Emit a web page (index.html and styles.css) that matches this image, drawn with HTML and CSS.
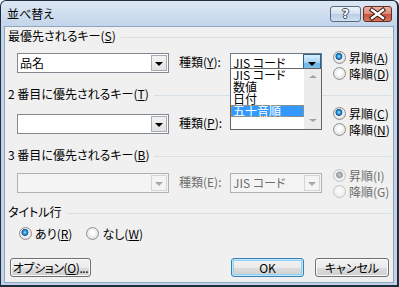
FILE: index.html
```html
<!DOCTYPE html>
<html lang="ja">
<head>
  <meta charset="UTF-8" />
  <title>並べ替え</title>
  <link rel="stylesheet" href="styles.css">
</head>
<body>
  <div class="window">
    <div class="titlebar">
      <span class="title">並べ替え</span>
      <div class="caption-buttons">
        <span class="cap-btn help">?</span>
        <span class="cap-btn close">
          <svg width="27" height="14" viewBox="0 0 27 14">
            <path d="M8 3 L19 11 M19 3 L8 11" stroke="#3b1a14" stroke-width="4.4" stroke-linecap="square" />
            <path d="M8 3 L19 11 M19 3 L8 11" stroke="#fff" stroke-width="2.4" stroke-linecap="square" />
          </svg>
        </span>
      </div>
    </div>

    <div class="frame">
      <div class="client">

        <div class="group-head first"><span>最優先されるキー(<u>S</u>)</span><i class="rule"></i></div>
        <div class="key-row row-1">
          <div class="combo wide"><span class="value">品名</span><span class="drop"><i class="arrow"></i></span></div>
          <span class="kind">種類(<u>Y</u>):</span>
          <div class="combo-wrap">
            <div class="combo narrow open"><span class="value">JIS コード</span><span class="drop"><i class="arrow"></i></span></div>
            <div class="dropdown-list">
              <ul class="items">
                <li>JIS コード</li>
                <li>数値</li>
                <li>日付</li>
                <li class="selected">五十音順</li>
              </ul>
              <div class="scrollbar">
                <i class="sb-up"></i>
                <i class="sb-down"></i>
              </div>
            </div>
          </div>
          <div class="order">
            <span class="radio"><i class="dot on"></i><span>昇順(<u>A</u>)</span></span>
            <span class="radio"><i class="dot"></i><span>降順(<u>D</u>)</span></span>
          </div>
        </div>

        <div class="group-head second"><span>2 番目に優先されるキー(<u>T</u>)</span><i class="rule"></i></div>
        <div class="key-row row-2">
          <div class="combo wide"><span class="value"></span><span class="drop"><i class="arrow"></i></span></div>
          <span class="kind">種類(<u>P</u>):</span>
          <div class="combo-wrap"></div>
          <div class="order">
            <span class="radio"><i class="dot on"></i><span>昇順(<u>C</u>)</span></span>
            <span class="radio"><i class="dot"></i><span>降順(<u>N</u>)</span></span>
          </div>
        </div>

        <div class="group-head third"><span>3 番目に優先されるキー(<u>B</u>)</span><i class="rule"></i></div>
        <div class="key-row row-3 disabled">
          <div class="combo wide"><span class="value"></span><span class="drop"><i class="arrow"></i></span></div>
          <span class="kind">種類(E):</span>
          <div class="combo-wrap">
            <div class="combo narrow"><span class="value">JIS コード</span><span class="drop"><i class="arrow"></i></span></div>
          </div>
          <div class="order">
            <span class="radio"><i class="dot on"></i><span>昇順(I)</span></span>
            <span class="radio"><i class="dot"></i><span>降順(G)</span></span>
          </div>
        </div>

        <div class="group-head fourth"><span>タイトル行</span><i class="rule"></i></div>
        <div class="title-opts">
          <span class="radio"><i class="dot on"></i><span>あり(<u>R</u>)</span></span>
          <span class="radio"><i class="dot"></i><span>なし(<u>W</u>)</span></span>
        </div>

        <div class="footer">
          <button class="btn options">オプション(<u>O</u>)...</button>
          <span class="spacer"></span>
          <button class="btn default">OK</button>
          <button class="btn cancel">キャンセル</button>
        </div>

      </div>
    </div>
  </div>
</body>
</html>
```

FILE: styles.css
```css
body {
  margin: 0;
  background: #fff;
}

.window {
  width: 399px;
  height: 287px;
  box-sizing: border-box;
  border: solid #1f2d3d;
  border-width: 1px 2px 2px 1px;
  border-radius: 6px 6px 0 0;
  background: linear-gradient(#dce7f4, #c3d5ea 25px, #c0d3e9);
  display: flex;
  flex-direction: column;
  font-family: "Noto Sans CJK JP", "Noto Sans", sans-serif;
  font-size: 12px;
  font-feature-settings: "palt";
  color: #000;
  overflow: hidden;
}

/* title bar */
.titlebar {
  height: 25px;
  flex: none;
  display: flex;
  align-items: center;
  padding: 0 5px 0 6px;
}

.title {
  flex: 1;
  font-size: 12px;
  line-height: 14px;
}

.caption-buttons {
  display: flex;
  gap: 2px;
  margin-top: 1px;
}

.cap-btn {
  height: 16px;
  box-sizing: border-box;
  border: 1px solid #5d6b80;
  border-radius: 3px;
  display: flex;
  align-items: center;
  justify-content: center;
}

.help {
  width: 31px;
  background: linear-gradient(#eef3f9, #d2dfee 50%, #b9cde4 50%, #cddff2);
  color: #fff;
  font-family: "DejaVu Sans", sans-serif;
  font-weight: bold;
  font-size: 12px;
  line-height: 14px;
  text-shadow: 1px 0 #39465a, -1px 0 #39465a, 0 1px #39465a, 0 -1px #39465a;
}

.close {
  width: 29px;
  border-color: #6a2c22;
  background: linear-gradient(#eab3a6, #d98a78 50%, #c5533a 50%, #d6775d);
}

/* frame & client */
.frame {
  flex: 1;
  display: flex;
  padding: 0 3px 2px 3px;
}

.client {
  flex: 1;
  border: 1px solid #8fa4bd;
  background: #f0f0f0;
  display: flex;
  flex-direction: column;
}

u {
  text-decoration: underline;
  text-underline-offset: 1px;
}

/* group headings */
.group-head {
  display: flex;
  align-items: center;
  height: 14px;
  line-height: 14px;
  padding: 0 2px 0 3px;
  white-space: nowrap;
}

.group-head .rule {
  flex: 1;
  height: 1px;
  margin: 3px 0 0 5px;
  background: #d5dfe5;
}

.group-head.first { margin-top: 2px; }
.group-head.second { margin-top: 6px; }
.group-head.third { margin-top: 11px; }
.group-head.fourth { margin-top: 6px; }

/* key rows */
.key-row {
  display: flex;
  align-items: flex-start;
  padding-left: 12px;
  height: 32px;
}

.row-1 { margin-top: 6px; }
.row-2 { margin-top: 4px; }
.row-3 { margin-top: 5px; }

.row-1 .combo, .row-1 .kind { margin-top: 4px; }
.row-2 .combo, .row-2 .kind { margin-top: 9px; }
.row-3 .combo, .row-3 .kind { margin-top: 6px; }

.combo {
  height: 20px;
  box-sizing: border-box;
  border: 1px solid #828790;
  background: #fff;
  display: flex;
  align-items: stretch;
}

.combo.wide { width: 152px; }
.combo.narrow { width: 92px; }

.combo .value {
  flex: 1;
  padding-left: 2px;
  line-height: 18px;
  white-space: nowrap;
}

.combo .drop {
  width: 16px;
  margin: 1px;
  box-sizing: border-box;
  border: 1px solid #a5acb5;
  background: linear-gradient(#f3f3f3, #e2e2e2);
  display: flex;
  align-items: center;
  justify-content: center;
}

.arrow {
  width: 0;
  height: 0;
  border-left: 4px solid transparent;
  border-right: 4px solid transparent;
  border-top: 4px solid #000;
  margin-top: 1px;
}

.combo.open {
  border-color: #6d7a88;
}

.combo.open .drop {
  margin: 0;
  width: 18px;
  border-color: #2c628b;
  background: linear-gradient(#d9eefb, #a9d5f3 45%, #6db4e6 55%, #8ec8ef);
}

.kind {
  width: 51px;
  margin-left: 10px;
  line-height: 18px;
  white-space: nowrap;
}

.combo-wrap {
  width: 92px;
  position: relative;
}

.dropdown-list {
  position: absolute;
  top: 19px;
  left: 0;
  width: 92px;
  height: 62px;
  box-sizing: border-box;
  border: 1px solid #646464;
  background: #fff;
  display: flex;
  z-index: 2;
}

.items {
  list-style: none;
  margin: 0;
  padding: 0;
  flex: 1;
}

.items li {
  height: 12px;
  line-height: 12px;
  padding-left: 2px;
  white-space: nowrap;
}

.items li.selected {
  background: #3399ff;
  color: #fff;
  outline: 1px dotted #d48a2a;
  outline-offset: -1px;
}

.scrollbar {
  width: 17px;
  background: #ececec;
  display: flex;
  flex-direction: column;
  justify-content: space-between;
  align-items: center;
  padding: 6px 0 7px;
  box-sizing: border-box;
}

.sb-up, .sb-down {
  width: 0;
  height: 0;
  border-left: 4px solid transparent;
  border-right: 4px solid transparent;
}

.sb-up { border-bottom: 3px solid #a3a3a3; }
.sb-down { border-top: 3px solid #a3a3a3; }

/* radios */
.order {
  display: flex;
  flex-direction: column;
  margin-left: 11px;
}

.radio {
  height: 16px;
  display: flex;
  align-items: center;
  gap: 3px;
  white-space: nowrap;
}

.dot {
  width: 13px;
  height: 13px;
  box-sizing: border-box;
  border-radius: 50%;
  border: 1px solid #8e8f8f;
  background: radial-gradient(circle at 50% 45%, #ffffff 20%, #e3e3e3 70%, #cfcfcf);
}

.dot.on {
  background:
    radial-gradient(circle at 45% 40%, #a7e0ff 0, #3a9de0 1.5px, #145a98 3.2px, transparent 3.8px),
    radial-gradient(circle at 50% 45%, #ffffff 20%, #e3e3e3 70%, #cfcfcf);
}

/* disabled row */
.disabled .kind,
.disabled .radio,
.disabled .combo .value {
  color: #6d6d6d;
}

.disabled .combo {
  border-color: #adb2b5;
  background: #f4f4f4;
}

.disabled .combo .drop {
  border-color: #d3d6d8;
  background: #f4f4f4;
}

.disabled .arrow {
  border-top-color: #a8a8a8;
}

.disabled .dot {
  border-color: #c4c4c4;
  background: radial-gradient(circle at 50% 45%, #fafafa 20%, #ececec 70%, #e0e0e0);
}

.disabled .dot.on {
  background:
    radial-gradient(circle at 50% 45%, #c9c9c9 0, #9a9a9a 3px, transparent 3.8px),
    radial-gradient(circle at 50% 45%, #fafafa 20%, #ececec 70%, #e0e0e0);
}

/* title row option */
.title-opts {
  display: flex;
  gap: 14px;
  padding-left: 14px;
  margin-top: 6px;
}

/* buttons */
.footer {
  display: flex;
  align-items: center;
  padding: 0 4px 0 5px;
  margin-top: 17px;
  gap: 11px;
}

.spacer { flex: 1; }

.btn {
  height: 19px;
  padding: 0;
  font: inherit;
  font-feature-settings: "palt";
  color: #000;
  white-space: nowrap;
  border: 1px solid #707070;
  border-radius: 3px;
  background: linear-gradient(#f2f2f2, #ebebeb 50%, #dddddd 50%, #cfcfcf);
  box-shadow: inset 0 0 0 1px #fbfbfb;
  line-height: 16px;
}

.btn.options { width: 81px; letter-spacing: -0.4px; }
.btn.default { width: 73px; border-color: #3c7fb1; box-shadow: inset 0 0 0 1px #bfe8fb, inset 0 0 0 2px #8fd3f4; }
.btn.cancel { width: 74px; }
```
